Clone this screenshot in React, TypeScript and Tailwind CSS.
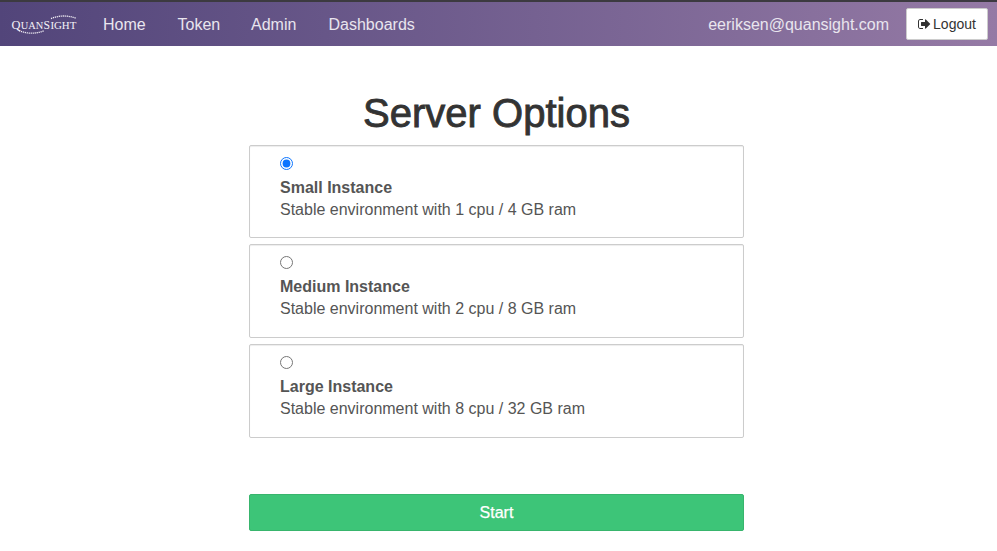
import { useState } from 'react';

const options = [
  { id: 'small', name: 'Small Instance', detail: 'Stable environment with 1 cpu / 4 GB ram', height: 'h-[93px]' },
  { id: 'medium', name: 'Medium Instance', detail: 'Stable environment with 2 cpu / 8 GB ram', height: 'h-[94px]' },
  { id: 'large', name: 'Large Instance', detail: 'Stable environment with 8 cpu / 32 GB ram', height: 'h-[94px]' },
];

function Logo() {
  return (
    <svg viewBox="0 0 68 22" className="h-[22px] w-[68px] shrink-0" fill="#f4f1f7">
      <g fontFamily="Liberation Serif, serif">
        <text x="0.5" y="16" fontSize="12.5" textLength="9" lengthAdjust="spacingAndGlyphs">Q</text>
        <text x="9.7" y="16" fontSize="9.6" textLength="22.5" lengthAdjust="spacingAndGlyphs">UAN</text>
        <text x="32.5" y="16" fontSize="12.5" textLength="6.5" lengthAdjust="spacingAndGlyphs">S</text>
        <text x="39.4" y="16" fontSize="9.6" textLength="26" lengthAdjust="spacingAndGlyphs">IGHT</text>
      </g>
      <g fill="none" stroke="#f4f1f7" strokeWidth="1.3" strokeDasharray="1.2 0.8">
        <path d="M40 5.6Q52 0.6 65 5.2" />
        <path d="M8 17.6Q20 22.6 33 17.8" />
      </g>
    </svg>
  );
}

function SignOutIcon() {
  return (
    <svg viewBox="0 0 1664 1792" className="h-[14px] w-[13px]" fill="currentColor">
      <path d="M640 1440q0 4 1 20t.5 26.5-3 23.5-10 19.5-20.5 6.5h-320q-119 0-203.5-84.5t-84.5-203.5v-704q0-119 84.5-203.5t203.5-84.5h320q13 0 22.5 9.5t9.5 22.5q0 4 1 20t.5 26.5-3 23.5-10 19.5-20.5 6.5h-320q-66 0-113 47t-47 113v704q0 66 47 113t113 47h312l11.5 1 11.5 3 8 5.5 7 9 2 13.5zm928-544q0 26-19 45l-544 544q-19 19-45 19t-45-19-19-45v-288h-448q-26 0-45-19t-19-45v-384q0-26 19-45t45-19h448v-288q0-26 19-45t45-19 45 19l544 544q19 19 19 45z" />
    </svg>
  );
}

export default function App() {
  const [selected, setSelected] = useState('small');
  return (
    <div className="h-[551px] overflow-hidden bg-white font-['Liberation_Sans',Arial,sans-serif] text-[16px] text-[#555]">
      <header className="flex h-[46px] items-center border-t-2 border-[#3c3a40] bg-linear-to-r from-[#52457a] to-[#957aa5] pr-[9px] pl-[11px] text-[#e9e5ee]">
        <Logo />
        <nav className="ml-[24px] flex flex-1 items-center gap-[32px] pt-[2px] whitespace-nowrap">
          <a className="w-[42.5px]">Home</a>
          <a className="w-[41.5px]">Token</a>
          <a className="w-[45.5px]">Admin</a>
          <a>Dashboards</a>
        </nav>
        <span className="mr-[17px] pt-[2px]">eeriksen@quansight.com</span>
        <button className="flex h-[32px] w-[82px] items-center justify-center gap-[2px] rounded-[2px] border border-[#ccc] bg-white text-[14px] text-[#333]">
          <SignOutIcon />
          <span>Logout</span>
        </button>
      </header>
      <main className="ml-[249px] w-[495px]">
        <h1 className="flex h-[99px] items-center justify-center pt-[34px] text-[40px] leading-[44px] whitespace-nowrap text-[#333] [-webkit-text-stroke:0.9px_#333]">
          Server Options
        </h1>
        <form className="flex flex-col gap-[6px]">
          {options.map((o) => (
            <label
              key={o.id}
              className={`${o.height} block rounded-[2px] border border-[#ccc] pt-[11px] pl-[30px] shadow-[inset_0_1px_1px_rgba(0,0,0,0.075)]`}
            >
              <input
                type="radio"
                name="server"
                checked={selected === o.id}
                onChange={() => setSelected(o.id)}
                className="block size-[13px] accent-[#0d75ff]"
              />
              <div className="mt-[7px] leading-[22px] font-bold">{o.name}</div>
              <div className="leading-[22px]">{o.detail}</div>
            </label>
          ))}
        </form>
        <button className="mt-[56px] block h-[37px] w-full rounded-[2px] border border-[#38b56d] bg-[#3dc578] pt-[1px] text-white [-webkit-text-stroke:0.25px_white]">
          Start
        </button>
      </main>
    </div>
  );
}
